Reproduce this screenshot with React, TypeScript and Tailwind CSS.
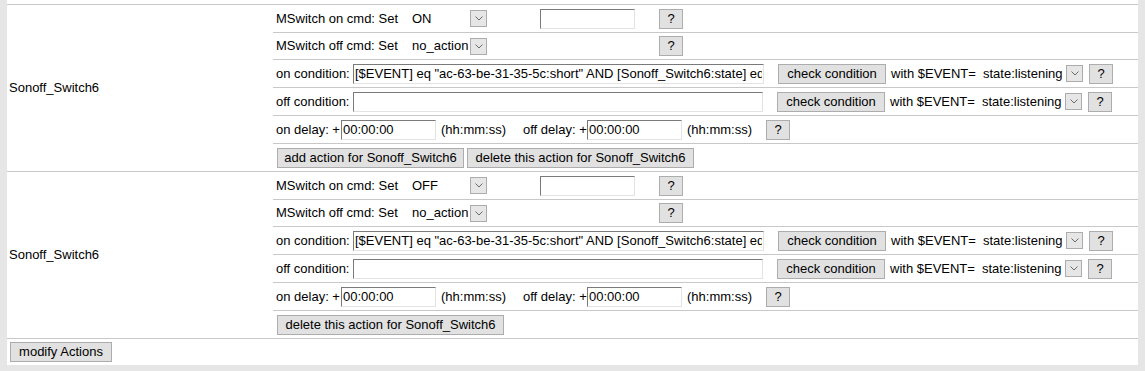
import React from "react";

const condition =
  '[$EVENT] eq "ac-63-be-31-35-5c:short" AND [Sonoff_Switch6:state] eq "off"';

const Chevron = () => (
  <svg width="8" height="5" viewBox="0 0 8 5" fill="none">
    <path d="M0.5 0.5 L4 4 L7.5 0.5" stroke="#6a6a6a" strokeWidth="1" />
  </svg>
);

const Select = ({ value, className }: { value: string; className: string }) => (
  <div className={`flex items-center h-[19px] ${className}`}>
    <span className="flex-1 pl-[4px] whitespace-nowrap">{value}</span>
    <span className="w-[17px] h-[17px] border border-[#acacac] bg-[#e6e6e6] flex items-center justify-center">
      <Chevron />
    </span>
  </div>
);

const Input = ({ value = "", className }: { value?: string; className: string }) => (
  <input
    readOnly
    defaultValue={value}
    className={`h-[20px] px-[1px] bg-white outline-none text-[13px] text-black border border-t-[#7a7a7a] border-l-[#7a7a7a] border-r-[#e3e3e3] border-b-[#e3e3e3] font-['Liberation_Sans',Arial,sans-serif] ${className}`}
  />
);

const Button = ({ children, className }: { children: React.ReactNode; className: string }) => (
  <button className={`h-[20px] bg-[#e1e1e1] border border-[#adadad] text-[13px] text-black flex items-center justify-center whitespace-nowrap ${className}`}>
    {children}
  </button>
);

const rowCls = "flex items-center pl-[3px] border-t border-[#c8c8c8] whitespace-nowrap";

const Block = ({ onCmd, showAdd }: { onCmd: string; showAdd: boolean }) => (
  <div className="flex border-t border-[#c8c8c8]">
    <div className="w-[266px] flex items-center pl-[2px]">Sonoff_Switch6</div>
    <div className="flex-1">
      <div className="flex items-center pl-[3px] h-[27px] whitespace-nowrap">
        <span className="w-[132px]">MSwitch on cmd: Set</span>
        <Select value={onCmd} className="w-[79px]" />
        <Input className="ml-[53px] w-[95px]" />
        <Button className="ml-[24px] w-[24px]">?</Button>
      </div>
      <div className={`${rowCls} h-[27px]`}>
        <span className="w-[132px]">MSwitch off cmd: Set</span>
        <Select value="no_action" className="w-[79px]" />
        <Button className="ml-[172px] w-[24px]">?</Button>
      </div>
      <div className={`${rowCls} h-[28px]`}>
        <span className="w-[77px]">on condition:</span>
        <Input value={condition} className="w-[411px]" />
        <Button className="ml-[14px] w-[108px]">check condition</Button>
        <span className="ml-[5px] w-[88px]">with $EVENT=</span>
        <Select value="state:listening" className="w-[104px]" />
        <Button className="ml-[6px] w-[24px]">?</Button>
      </div>
      <div className={`${rowCls} h-[28px]`}>
        <span className="w-[77px]">off condition:</span>
        <Input className="w-[410px]" />
        <Button className="ml-[14px] w-[108px]">check condition</Button>
        <span className="ml-[5px] w-[88px]">with $EVENT=</span>
        <Select value="state:listening" className="w-[104px]" />
        <Button className="ml-[6px] w-[24px]">?</Button>
      </div>
      <div className={`${rowCls} h-[28px]`}>
        <span className="w-[65px]">on delay: +</span>
        <Input value="00:00:00" className="w-[95px]" />
        <span className="ml-[5px] w-[82px]">(hh:mm:ss)</span>
        <span className="w-[64px]">off delay: +</span>
        <Input value="00:00:00" className="w-[95px]" />
        <span className="ml-[5px] w-[79px]">(hh:mm:ss)</span>
        <Button className="w-[24px]">?</Button>
      </div>
      <div className={`${rowCls} pl-[4px] h-[28px] gap-[3px]`}>
        {showAdd && <Button className="w-[187px]">add action for Sonoff_Switch6</Button>}
        <Button className="w-[227px]">delete this action for Sonoff_Switch6</Button>
      </div>
    </div>
  </div>
);

export default function App() {
  return (
    <div className="w-[1145px] h-[371px] bg-[#e6e6e6] px-[7px] text-[13px] text-black font-['Liberation_Sans',Arial,sans-serif]">
      <div className="bg-white pt-[4px] h-[365px]">
        <Block onCmd="ON" showAdd />
        <Block onCmd="OFF" showAdd={false} />
        <div className="flex items-center h-[27px] pl-[3px] border-t border-[#c8c8c8]">
          <Button className="w-[102px]">modify Actions</Button>
        </div>
      </div>
    </div>
  );
}
